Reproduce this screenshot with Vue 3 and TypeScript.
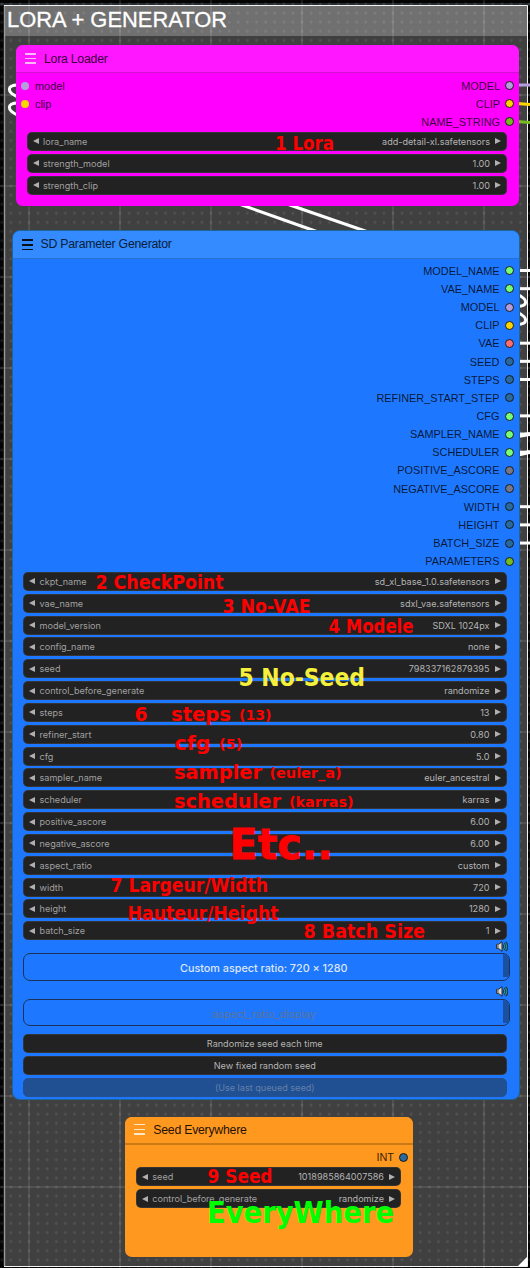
<script setup lang="ts">
interface Output { name: string; color: string }
interface Widget { name: string; value: string }
interface Note { text: string; x: number; y: number; w: number; size: number; color?: string; heavy?: boolean }

const lilac = '#b39ddb'
const gold = '#ffd500'
const olive = '#77bb22'
const mint = '#77ff77'
const steel = '#29699c'
const grey = '#777788'

const loraInputs: Output[] = [
  { name: 'model', color: lilac },
  { name: 'clip', color: gold },
]
const loraOutputs: Output[] = [
  { name: 'MODEL', color: lilac },
  { name: 'CLIP', color: gold },
  { name: 'NAME_STRING', color: olive },
]
const loraWidgets: Widget[] = [
  { name: 'lora_name', value: 'add-detail-xl.safetensors' },
  { name: 'strength_model', value: '1.00' },
  { name: 'strength_clip', value: '1.00' },
]
const sdOutputs: Output[] = [
  { name: 'MODEL_NAME', color: mint },
  { name: 'VAE_NAME', color: mint },
  { name: 'MODEL', color: lilac },
  { name: 'CLIP', color: gold },
  { name: 'VAE', color: '#ff6e6e' },
  { name: 'SEED', color: steel },
  { name: 'STEPS', color: steel },
  { name: 'REFINER_START_STEP', color: steel },
  { name: 'CFG', color: mint },
  { name: 'SAMPLER_NAME', color: mint },
  { name: 'SCHEDULER', color: mint },
  { name: 'POSITIVE_ASCORE', color: grey },
  { name: 'NEGATIVE_ASCORE', color: grey },
  { name: 'WIDTH', color: steel },
  { name: 'HEIGHT', color: steel },
  { name: 'BATCH_SIZE', color: steel },
  { name: 'PARAMETERS', color: olive },
]
const sdWidgets: Widget[] = [
  { name: 'ckpt_name', value: 'sd_xl_base_1.0.safetensors' },
  { name: 'vae_name', value: 'sdxl_vae.safetensors' },
  { name: 'model_version', value: 'SDXL 1024px' },
  { name: 'config_name', value: 'none' },
  { name: 'seed', value: '798337162879395' },
  { name: 'control_before_generate', value: 'randomize' },
  { name: 'steps', value: '13' },
  { name: 'refiner_start', value: '0.80' },
  { name: 'cfg', value: '5.0' },
  { name: 'sampler_name', value: 'euler_ancestral' },
  { name: 'scheduler', value: 'karras' },
  { name: 'positive_ascore', value: '6.00' },
  { name: 'negative_ascore', value: '6.00' },
  { name: 'aspect_ratio', value: 'custom' },
  { name: 'width', value: '720' },
  { name: 'height', value: '1280' },
  { name: 'batch_size', value: '1' },
]
const seedWidgets: Widget[] = [
  { name: 'seed', value: '1018985864007586' },
  { name: 'control_before_generate', value: 'randomize' },
]
const notes: Note[] = [
  { text: '1 Lora', x: 275, y: 149.5, w: 59, size: 19.5 },
  { text: '2 CheckPoint', x: 95.5, y: 588.5, w: 128, size: 19.5 },
  { text: '3 No-VAE', x: 222.5, y: 612.5, w: 88, size: 19.5 },
  { text: '4 Modele', x: 328.5, y: 632.6, w: 85, size: 19.5 },
  { text: '5 No-Seed', x: 238.5, y: 685.5, w: 126.5, size: 25, color: '#f5f03c' },
  { text: '6', x: 134.5, y: 720.5, w: 13, size: 19 },
  { text: 'steps', x: 171, y: 720.5, w: 60, size: 19 },
  { text: '(13)', x: 239, y: 720, w: 32.5, size: 13.5 },
  { text: 'cfg', x: 174.5, y: 749.8, w: 36, size: 19 },
  { text: '(5)', x: 219, y: 749.3, w: 23.5, size: 13.5 },
  { text: 'sampler', x: 174, y: 778.6, w: 88, size: 19 },
  { text: '(euler_a)', x: 269.5, y: 778, w: 72, size: 13.5 },
  { text: 'scheduler', x: 174, y: 807.8, w: 107, size: 19 },
  { text: '(karras)', x: 289, y: 806.8, w: 64.5, size: 13.5 },
  { text: 'Etc..', x: 229.5, y: 858.7, w: 103.5, size: 43, heavy: true },
  { text: '7 Largeur/Width', x: 110.5, y: 891.6, w: 157.5, size: 19.5 },
  { text: 'Hauteur/Height', x: 127.5, y: 919.6, w: 151, size: 19.5 },
  { text: '8 Batch Size', x: 303.5, y: 937.6, w: 121.5, size: 19.5 },
  { text: '9 Seed', x: 207.5, y: 1183.3, w: 65, size: 19.5 },
  { text: 'EveryWhere', x: 207, y: 1222.7, w: 187, size: 31, color: '#00ff00' },
]
const wireRows = [0, 1, 4, 5, 6, 8, 9, 10, 13, 14, 15]
</script>

<template>
  <div class="canvas">
    <svg class="backdrop" width="530" height="1268" viewBox="0 0 530 1268">
      <defs>
        <pattern id="minor" x="24.45" y="90.45" width="9.1" height="9.1" patternUnits="userSpaceOnUse">
          <path d="M3 4.55h3.1M4.55 3v3.1" stroke="#fff" stroke-opacity=".12" stroke-width="1" />
        </pattern>
        <pattern id="major" x="28" y="94" width="91" height="91" patternUnits="userSpaceOnUse">
          <path d="M0 1h91M1 0v91" stroke="#fff" stroke-opacity=".09" stroke-width="2" />
        </pattern>
      </defs>
      <rect width="530" height="1268" fill="#040404" />
      <rect width="530" height="3" y="3" fill="#10181a" />
      <rect x="4" y="5" width="524" height="1261" fill="#404040" />
      <rect x="4" y="5" width="524" height="31" fill="#707070" />
      <rect width="530" height="1268" fill="url(#minor)" />
      <rect width="530" height="1268" fill="url(#major)" />
      <path d="M4.5 5V1266" stroke="#999" stroke-width="1.4" />
      <path d="M4 5.5H527.5V1266.5H4" fill="none" stroke="#f4f4f4" stroke-width="1" />
      <path d="M527 1257v9h-9z" fill="#fff" />
      <g fill="none" stroke="#fff" stroke-width="3">
        <path d="M18 85C7 85 6 92 18 97" />
        <path d="M18 103C7 103 6 110 18 115.5" />
        <path d="M239 204L318 232M287 204L368 232" />
        <path d="M517 294C529 300 528 306 517 306.5M517 312C529 318 528 324 517 324.5" />
        <path v-for="r in wireRows" :key="r" :d="`M517 ${270.5 + r * 18.17}H530`" />
        <path d="M518 436l12-2M518 454.5l12-2.5" stroke-width="4" />
        <path d="M517 85H530" :stroke="lilac" />
        <path d="M517 103.5L530 104.5" :stroke="gold" />
        <path d="M517 121.5L530 122.5" :stroke="olive" />
      </g>
    </svg>

    <h1 class="group-title">LORA + GENERATOR</h1>

    <section class="node lora">
      <header class="head"><i class="burger" /><span>Lora Loader</span></header>
      <div class="slots">
        <div class="col">
          <div v-for="s in loraInputs" :key="s.name" class="slot in">
            <i class="dot bare" :style="{ background: s.color }" />{{ s.name }}
          </div>
        </div>
        <div class="col">
          <div v-for="s in loraOutputs" :key="s.name" class="slot out">
            {{ s.name }}<i class="dot" :style="{ background: s.color }" />
          </div>
        </div>
      </div>
      <div class="widgets">
        <div v-for="w in loraWidgets" :key="w.name" class="widget">
          <i class="arrow left" /><span class="name">{{ w.name }}</span>
          <span class="value">{{ w.value }}</span><i class="arrow right" />
        </div>
      </div>
    </section>

    <section class="node sd">
      <header class="head"><i class="burger" /><span>SD Parameter Generator</span></header>
      <div class="slots">
        <div class="col">
          <div v-for="s in sdOutputs" :key="s.name" class="slot out">
            {{ s.name }}<i class="dot" :style="{ background: s.color }" />
          </div>
        </div>
      </div>
      <div class="widgets">
        <div v-for="w in sdWidgets" :key="w.name" class="widget">
          <i class="arrow left" /><span class="name">{{ w.name }}</span>
          <span class="value">{{ w.value }}</span><i class="arrow right" />
        </div>
      </div>
      <div v-for="n in 2" :key="n" class="field-group">
        <svg class="speaker" width="12" height="11" viewBox="0 0 12 11">
          <path d="M.7 3.3h2L6 .7v9.6L2.7 7.5h-2z" fill="#ddd" stroke="#222" stroke-width="1" />
          <path d="M1 3.5h1.800v3.8H1z" fill="#888" />
          <path d="M7.300 3.5q1.300 2 0 4M8.500 2q2.800 3.500 0 7M10 1q3 4.500 0 9" fill="none" stroke="#123c4a" stroke-width="1.6" />
          <path d="M8 3.3q1.500 2.200 0 4.400M9.700 2q2 3.500 0 7" fill="none" stroke="#35b6c0" stroke-width=".8" />
        </svg>
        <div class="field" :class="{ placeholder: n === 2 }">
          <span>{{ n === 1 ? 'Custom aspect ratio: 720 × 1280' : 'aspect_ratio_display' }}</span>
          <i class="track" />
        </div>
      </div>
      <div class="buttons">
        <button class="btn">Randomize seed each time</button>
        <button class="btn">New fixed random seed</button>
        <button class="btn off">(Use last queued seed)</button>
      </div>
    </section>

    <section class="node seed">
      <header class="head"><i class="burger" /><span>Seed Everywhere</span></header>
      <div class="slots">
        <div class="col">
          <div class="slot out">INT<i class="dot int" /></div>
        </div>
      </div>
      <div class="widgets">
        <div v-for="w in seedWidgets" :key="w.name" class="widget">
          <i class="arrow left" /><span class="name">{{ w.name }}</span>
          <span class="value">{{ w.value }}</span><i class="arrow right" />
        </div>
      </div>
    </section>

    <svg class="notes" width="530" height="1268" viewBox="0 0 530 1268">
      <text
        v-for="n in notes" :key="n.text" :x="n.x" :y="n.y" :textLength="n.w"
        lengthAdjust="spacingAndGlyphs" :font-size="n.size" :fill="n.color ?? '#ff0000'"
        :class="{ heavy: n.heavy }"
      >{{ n.text }}</text>
    </svg>
  </div>
</template>

<style>
html, body { margin: 0; background: #040404; }
</style>

<style scoped>
.canvas { position: relative; width: 530px; height: 1268px; overflow: hidden; font-family: "Liberation Sans", Arial, sans-serif; }
.backdrop, .notes { position: absolute; left: 0; top: 0; display: block; }
.notes { pointer-events: none; font-family: "DejaVu Sans", sans-serif; font-weight: 700; }
.heavy { stroke: #ff0000; stroke-width: 0.8px; }
.group-title { position: absolute; left: 7px; top: 7px; margin: 0; font-size: 21.9px; line-height: 25px; font-weight: 400; color: #fff; -webkit-text-stroke: 0.3px #fff; white-space: nowrap; }

.node { position: absolute; box-sizing: border-box; border-radius: 7px; overflow: hidden; }
.lora { left: 16px; top: 45px; width: 503px; height: 160.5px; background: #ff00ff; }
.sd { left: 12.5px; top: 230.5px; width: 506px; height: 868.5px; background: #1e78ff; box-shadow: 0 0 0 1px #1d659c; }
.seed { left: 125.3px; top: 1117px; width: 287.7px; height: 140px; background: #ff981f; }

.head { box-sizing: border-box; height: 27.7px; display: flex; align-items: center; gap: 8px; padding-left: 9px; font-size: 12.3px; letter-spacing: -0.25px; line-height: 27px; white-space: nowrap; border-bottom: 1px solid rgba(0, 0, 0, 0.18); }
.head span { padding-top: 1.6px; }
.lora .head { background: #ff17ff; color: #3d003d; }
.sd .head { height: 28px; background: #338bff; color: #0a2038; }
.seed .head { background: #ff981f; color: #1f1206; border-bottom-width: 2px; border-bottom-color: rgba(0, 0, 0, 0.2); }
.burger { width: 11px; height: 11px; background: linear-gradient(#ffb9ff 0 1.5px, transparent 1.5px 5px, #ffb9ff 5px 6.5px, transparent 6.5px 9.5px, #ffb9ff 9.5px); }
.sd .burger { background: linear-gradient(#06101c 0 1.5px, transparent 1.5px 5px, #06101c 5px 6.5px, transparent 6.5px 9.5px, #06101c 9.5px); }
.seed .burger { background: linear-gradient(#ffe6c8 0 1.5px, transparent 1.5px 5px, #ffe6c8 5px 6.5px, transparent 6.5px 9.5px, #ffe6c8 9.5px); }

.slots { display: flex; justify-content: space-between; padding: 4px 5px 0; }
.lora .slots { padding-top: 3.8px; }
.sd .slots { padding-top: 3.2px; }
.seed .slots { padding-top: 3.5px; }
.col { margin-left: auto; }
.lora .col:first-child { margin-left: 0; }
.slot { height: 18.17px; display: flex; align-items: center; gap: 5px; font-size: 10.9px; color: rgba(0, 0, 0, 0.8); white-space: nowrap; }
.slot.out { justify-content: flex-end; }
.slot.in { gap: 6px; color: #3d003d; }
.dot { box-sizing: border-box; width: 9px; height: 9px; border: 1.2px solid #1a1a1a; border-radius: 50%; }
.dot.bare { width: 8px; height: 8px; border: 0; }
.dot.int { background: #29699c; }

.widgets { display: flex; flex-direction: column; gap: 2.83px; padding: 0 12px 0 10.5px; }
.lora .widgets { padding-top: 1px; }
.sd .widgets { padding-top: 1.6px; }
.seed .widgets { padding-top: 0.9px; }
.widget { box-sizing: border-box; height: 19px; display: flex; align-items: center; padding: 0 5px; background: #222; border: 1px solid rgba(60, 60, 60, 0.7); border-radius: 5px; font-family: Inter, sans-serif; font-size: 9.1px; line-height: 17px; color: #a0a0a0; white-space: nowrap; }
.name { margin-left: 4.5px; }
.value { margin-left: auto; margin-right: 5px; color: #b4b4b4; }
.arrow { width: 0; height: 0; border: 3.3px solid transparent; }
.arrow.left { border-left-width: 0; border-right: 6px solid #b0b0b0; }
.arrow.right { border-right-width: 0; border-left: 6px solid #b0b0b0; }

.field-group { display: flex; flex-direction: column; align-items: flex-end; padding: 1px 9px 0 10.5px; }
.field-group + .field-group { padding-top: 5.5px; }
.speaker { display: block; margin-right: 2px; }
.field { position: relative; box-sizing: border-box; width: 100%; height: 27.5px; margin-top: 1.2px; display: flex; align-items: center; justify-content: center; padding-top: 2px; padding-right: 5px; border: 1px solid #1b3157; border-radius: 7px; overflow: hidden; font-family: Inter, sans-serif; font-size: 10.8px; font-weight: 500; color: #dde6f5; }
.field.placeholder { margin-top: 1.6px; padding-top: 4px; color: #5f7391; font-weight: 400; }
.track { position: absolute; right: 0; top: 0; width: 6px; height: 23px; background: #1b4f9f; }
.buttons { display: flex; flex-direction: column; gap: 2.83px; padding: 7.5px 12px 0 10.5px; }
.btn { box-sizing: border-box; height: 19px; margin: 0; padding: 0; border: 1px solid rgba(60, 60, 60, 0.7); border-radius: 5px; background: #222; color: #b4b4b4; font-family: Inter, sans-serif; font-size: 9.1px; line-height: 17px; text-align: center; }
.btn.off { background: #205092; border-color: #24508f; color: #6480aa; }
</style>
